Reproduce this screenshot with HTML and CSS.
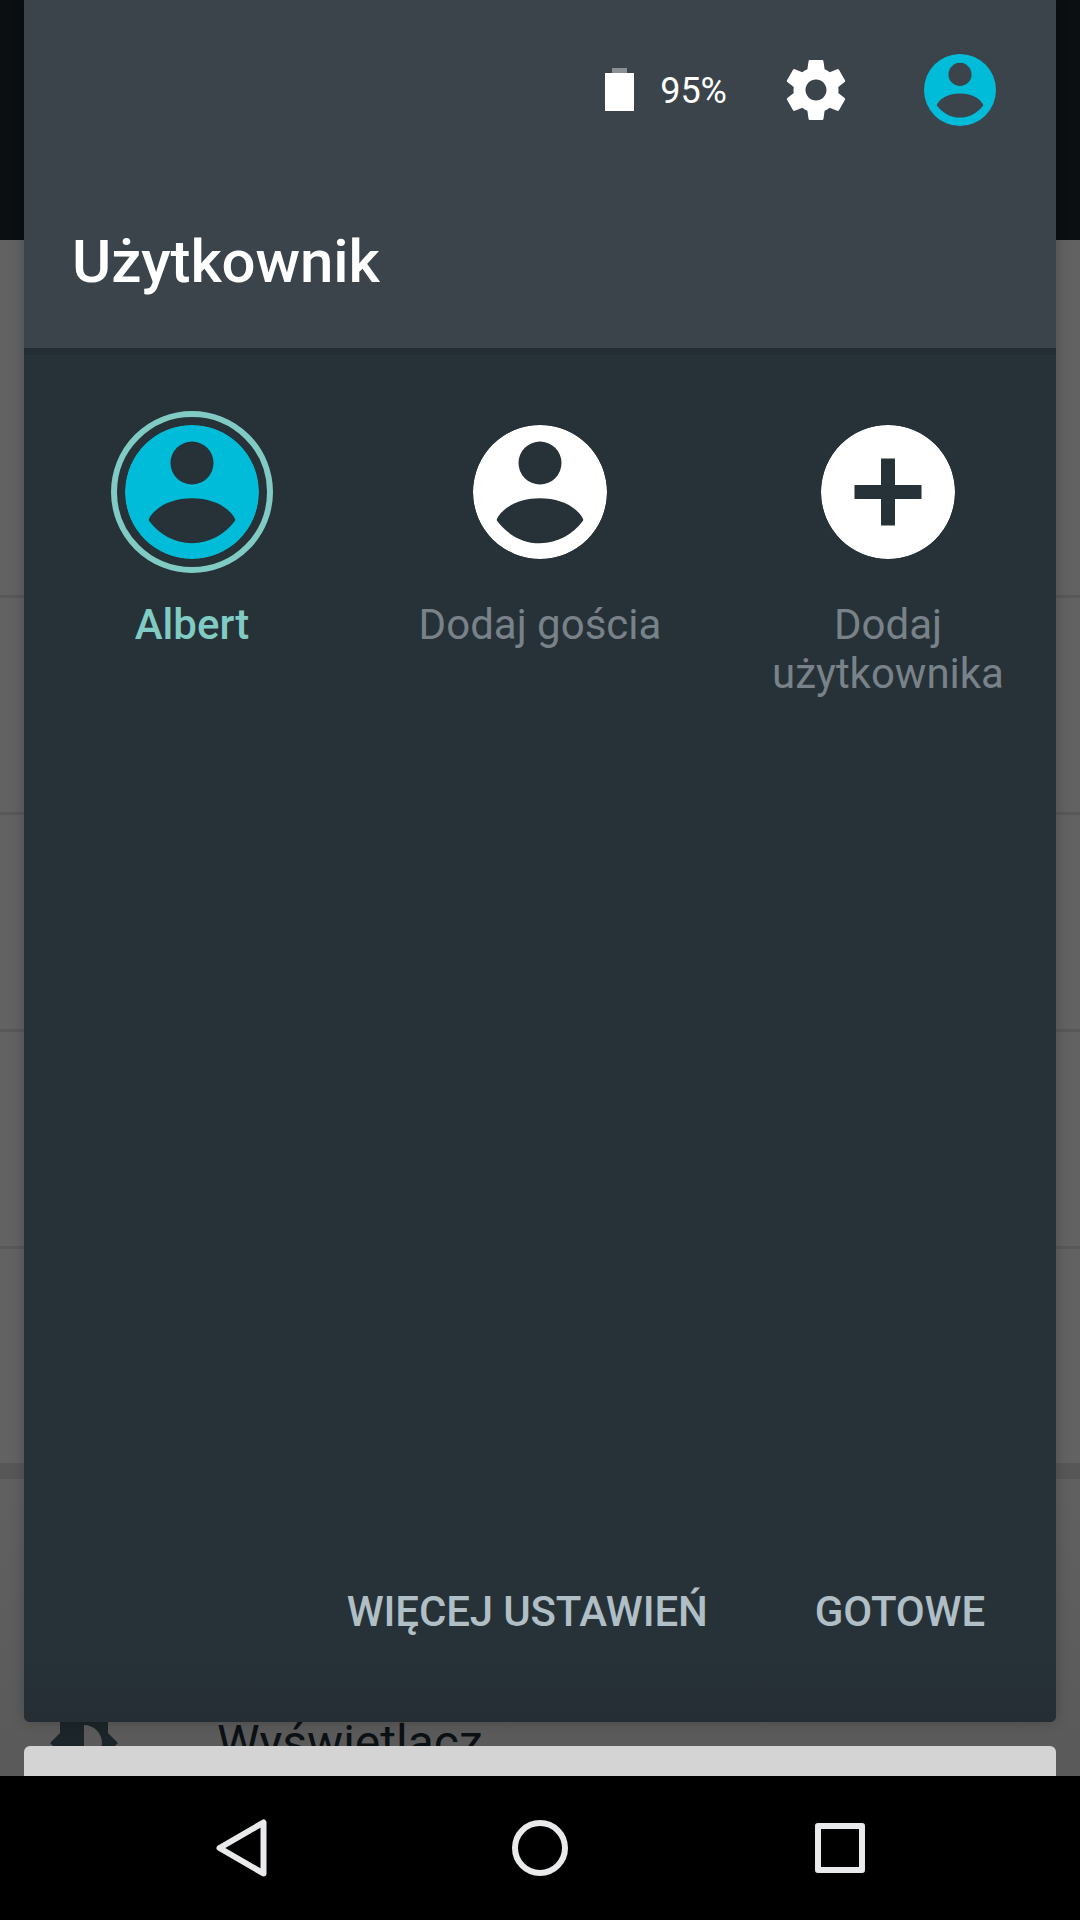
FILE: index.html
```html
<!DOCTYPE html>
<html lang="pl">
<head>
    <meta charset="UTF-8">
    <meta name="viewport" content="width=device-width, initial-scale=1.0">
    <title>Użytkownik</title>
    <link rel="stylesheet" href="styles.css">
</head>
<body>
    <svg class="defs" aria-hidden="true">
        <symbol id="person" viewBox="0 0 134 134">
            <path fill-rule="evenodd" d="M67 0a67 67 0 1 0 0 134a67 67 0 1 0 0-134zM67 16.500a21.500 21.500 0 1 1 0 43a21.500 21.500 0 1 1 0-43zM67 73.300c20 0 37 8.500 43 20.500c.3.800.3 1.600-.2 2.300c-9.800 13-24.800 22.200-42.800 22.200s-33-9.200-42.800-22.200c-.5-.7-.5-1.500-.2-2.300c6-12 23-20.500 43-20.500z"/>
        </symbol>
    </svg>

    <div class="screen">
        <!-- ekran ustawień pod panelem -->
        <div class="settings">
            <div class="appbar"></div>
            <div class="section-head"></div>
            <div class="row"></div>
            <div class="row"></div>
            <div class="row"></div>
            <div class="row"></div>
            <div class="row row-last"></div>
            <div class="section-head section-next"></div>
            <div class="row item">
                <svg class="item-icon" viewBox="0 0 24 24"><path fill-rule="evenodd" d="M20 15.310L23.310 12L20 8.690V4h-4.690L12 .690L8.690 4H4v4.690L.690 12L4 15.310V20h4.690L12 23.310L15.310 20H20v-4.690zM12 18V6c3.310 0 6 2.690 6 6s-2.690 6-6 6z"/></svg>
                <span class="item-title">Wyświetlacz</span>
            </div>
        </div>

        <div class="overlay">
            <div class="panel">
                <div class="panel-head">
                    <div class="status">
                        <svg class="battery" viewBox="0 0 29 43">
                            <rect class="battery-tip" x="7" y="0" width="15" height="5"/>
                            <rect class="battery-body" x="0" y="5" width="29" height="38"/>
                        </svg>
                        <span class="percent">95%</span>
                        <svg class="gear" viewBox="0 0 24 24"><path d="M19.430 12.980c.04-.32.07-.64.07-.98s-.03-.66-.07-.98l2.110-1.650c.19-.15.24-.42.12-.64l-2-3.460c-.12-.22-.39-.3-.61-.22l-2.490 1c-.52-.4-1.080-.73-1.690-.98l-.38-2.650C14.460 2.180 14.250 2 14 2h-4c-.25 0-.46.18-.49.42l-.38 2.650c-.61.25-1.170.59-1.690.98l-2.490-1c-.23-.09-.49 0-.61.22l-2 3.460c-.13.22-.07.49.12.64l2.110 1.650c-.04.32-.07.65-.07.98s.03.66.07.98l-2.110 1.650c-.19.15-.24.42-.12.64l2 3.460c.12.22.39.3.61.22l2.490-1c.52.4 1.080.73 1.690.98l.38 2.650c.03.24.24.42.49.42h4c.25 0 .46-.18.49-.42l.38-2.650c.61-.25 1.170-.59 1.690-.98l2.490 1c.23.09.49 0 .61-.22l2-3.460c.12-.22.07-.49-.12-.64l-2.110-1.650zM12 15.500c-1.930 0-3.500-1.570-3.500-3.500s1.570-3.500 3.500-3.500 3.500 1.570 3.500 3.500-1.570 3.500-3.500 3.500z"/></svg>
                        <svg class="me"><use href="#person"/></svg>
                    </div>
                    <h1 class="panel-title">Użytkownik</h1>
                </div>

                <div class="tiles">
                    <div class="tile tile-current">
                        <svg class="avatar"><use href="#person"/></svg>
                        <div class="tile-label">Albert</div>
                    </div>
                    <div class="tile">
                        <svg class="avatar"><use href="#person"/></svg>
                        <div class="tile-label">Dodaj gościa</div>
                    </div>
                    <div class="tile">
                        <svg class="avatar" viewBox="0 0 134 134"><path fill-rule="evenodd" d="M67 0a67 67 0 1 0 0 134a67 67 0 1 0 0-134zM60 33.500h14v26.500h26.500v14H74v26.500H60V74H33.500V60H60z"/></svg>
                        <div class="tile-label">Dodaj użytkownika</div>
                    </div>
                </div>

                <div class="panel-foot">
                    <span class="action">WIĘCEJ USTAWIEŃ</span>
                    <span class="action">GOTOWE</span>
                </div>
            </div>
            <div class="sheet"></div>
        </div>

        <div class="navbar">
            <div class="nav-btn">
                <svg width="60" height="70" viewBox="0 0 60 70"><path class="nav-line" d="M53.500 9.500V60.500L9.500 35z"/></svg>
            </div>
            <div class="nav-btn">
                <svg width="60" height="60" viewBox="0 0 60 60"><circle class="nav-line" cx="30" cy="30" r="25"/></svg>
            </div>
            <div class="nav-btn">
                <div class="nav-square"></div>
            </div>
        </div>
    </div>
</body>
</html>
```

FILE: styles.css
```css
body {
    margin: 0;
    font-family: Roboto, "Noto Sans", sans-serif;
}
.defs {
    display: none;
}
.screen {
    position: relative;
    width: 1080px;
    height: 1920px;
    display: flex;
    flex-direction: column;
    overflow: hidden;
    background: #000;
}

/* settings behind the panel */
.settings {
    flex: 1;
    min-height: 0;
    overflow: hidden;
    background: #626262;
}
.appbar {
    height: 240px;
    background: #0b0f12;
}
.section-head {
    height: 141px;
}
.section-next {
    height: 155px;
    background: linear-gradient(#606060, #5d5d5d);
}
.row {
    box-sizing: border-box;
    height: 217px;
    border-bottom: 3px solid #585858;
}
.row-last {
    height: 230px;
    border-bottom: 16px solid #575757;
}
.item {
    display: flex;
    align-items: center;
    background: linear-gradient(#5d5d5d, #585858);
    border-bottom: 0;
}
.item-icon {
    width: 72px;
    height: 72px;
    margin-left: 48px;
    fill: #1c2529;
}
.item-title {
    margin-left: 97px;
    font-size: 48px;
    color: #0b1114;
}

/* panel */
.overlay {
    position: absolute;
    top: 0;
    left: 0;
    right: 0;
    bottom: 144px;
    padding: 0 24px;
    display: flex;
    flex-direction: column;
    gap: 24px;
    overflow: hidden;
}
.panel {
    flex: none;
    height: 1722px;
    display: flex;
    flex-direction: column;
    background: #273238;
    border-radius: 0 0 6px 6px;
    box-shadow: 0 0 14px rgba(0, 0, 0, 0.22);
}
.panel-head {
    height: 348px;
    background: #3b444b;
}
.status {
    height: 180px;
    display: flex;
    align-items: center;
    justify-content: flex-end;
    padding-right: 60px;
}
.battery {
    width: 29px;
    height: 43px;
    margin-top: -1px;
}
.battery-tip {
    fill: #8b9094;
}
.battery-body {
    fill: #fff;
}
.percent {
    margin-left: 26px;
    margin-top: 2px;
    font-size: 36px;
    color: #fff;
}
.gear {
    width: 72px;
    height: 72px;
    margin-left: 53px;
    margin-right: 1px;
    fill: #fff;
}
.me {
    width: 72px;
    height: 72px;
    margin-left: 71px;
    fill: #00bcd8;
}
.panel-title {
    margin: 42px 0 0;
    padding-left: 48px;
    font-size: 60px;
    font-weight: 500;
    line-height: 80px;
    letter-spacing: -0.1px;
    color: #fff;
}
.tiles {
    display: flex;
    gap: 60px;
    padding: 70px 0 0 24px;
    border-top: 7px solid #232d33;
}
.tile {
    width: 288px;
    display: flex;
    flex-direction: column;
    align-items: center;
    text-align: center;
}
.avatar {
    width: 134px;
    height: 134px;
    fill: #fff;
    border-radius: 50%;
}
.tile-current .avatar {
    fill: #00bcd8;
    outline: 6px solid #80cbc4;
    outline-offset: 8px;
}
.tile-label {
    margin-top: 41px;
    font-size: 42px;
    line-height: 49px;
    color: #788288;
}
.tile-current .tile-label {
    font-weight: 500;
    color: #80cbc4;
}
.panel-foot {
    margin-top: auto;
    height: 224px;
    box-sizing: border-box;
    padding: 0 71px 86px 0;
    display: flex;
    align-items: flex-end;
    justify-content: flex-end;
    gap: 107px;
    background: linear-gradient(#273238 65%, #242e34);
    border-radius: 0 0 6px 6px;
}
.action {
    font-size: 42px;
    font-weight: 500;
    line-height: 49px;
    letter-spacing: -0.15px;
    color: #b0bec5;
}
.sheet {
    flex: none;
    height: 60px;
    background: #d4d4d4;
    border-radius: 6px 6px 0 0;
}

/* system navigation */
.navbar {
    flex: none;
    height: 144px;
    display: flex;
    justify-content: center;
    align-items: center;
    background: #000;
}
.nav-btn {
    width: 300px;
    display: flex;
    justify-content: center;
    align-items: center;
}
.nav-line {
    fill: none;
    stroke: #e8eaec;
    stroke-width: 6;
    stroke-linejoin: round;
}
.nav-square {
    box-sizing: border-box;
    width: 50px;
    height: 50px;
    border: 6px solid #e8eaec;
    border-radius: 3px;
}
```
